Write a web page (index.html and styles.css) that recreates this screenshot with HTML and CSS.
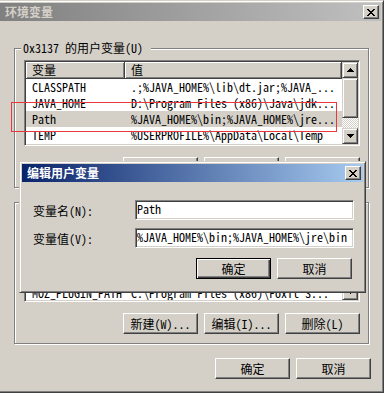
FILE: index.html
```html
<!DOCTYPE html>
<html lang="zh-CN">
<head>
    <meta charset="UTF-8">
    <meta name="viewport" content="width=device-width, initial-scale=1.0">
    <title>环境变量</title>
    <link rel="stylesheet" href="styles.css">
</head>
<body>
    <div class="window">
        <div class="caption inactive">
            <span class="caption-text">环境变量</span>
            <span class="cap-btn">
                <svg width="8" height="7" viewBox="0 0 8 7" shape-rendering="crispEdges"><path d="M0 0h2v1H0zM6 0h2v1H6zM1 1h2v1H1zM5 1h2v1H5zM2 2h4v1H2zM3 3h2v1H3zM2 4h4v1H2zM1 5h2v1H1zM5 5h2v1H5zM0 6h2v1H0zM6 6h2v1H6z" fill="#000"/></svg>
            </span>
        </div>

        <div class="group user-group">
            <div class="group-title">0x3137 的用户变量(U)</div>
            <div class="listview">
                <div class="list-main">
                    <div class="list-head">
                        <div class="hcell col-name">变量</div>
                        <div class="hcell col-value">值</div>
                    </div>
                    <div class="row"><span class="col-name">CLASSPATH</span><span class="col-value">.;%JAVA_HOME%\lib\dt.jar;%JAVA_...</span></div>
                    <div class="row"><span class="col-name">JAVA_HOME</span><span class="col-value">D:\Program Files (x86)\Java\jdk...</span></div>
                    <div class="row selected"><span class="col-name">Path</span><span class="col-value">%JAVA_HOME%\bin;%JAVA_HOME%\jre...</span></div>
                    <div class="row"><span class="col-name">TEMP</span><span class="col-value">%USERPROFILE%\AppData\Local\Temp</span></div>
                </div>
                <div class="scrollbar">
                    <div class="sb-btn"><svg width="7" height="4" viewBox="0 0 7 4" shape-rendering="crispEdges"><path d="M3 0h1v1H3zM2 1h3v1H2zM1 2h5v1H1zM0 3h7v1H0z" fill="#000"/></svg></div>
                    <div class="sb-thumb"></div>
                    <div class="sb-track"></div>
                    <div class="sb-btn"><svg width="7" height="4" viewBox="0 0 7 4" shape-rendering="crispEdges"><path d="M0 0h7v1H0zM1 1h5v1H1zM2 2h3v1H2zM3 3h1v1H3z" fill="#000"/></svg></div>
                </div>
            </div>
            <!-- these buttons sit under the edit dialog, only their top edge shows -->
            <div class="btn-row">
                <button class="btn"></button>
                <button class="btn"></button>
                <button class="btn"></button>
            </div>
        </div>

        <div class="group sys-group">
            <div class="listview">
                <div class="list-main">
                    <div class="rows scrolled">
                        <div class="row"><span class="col-name">MOZ_PLUGIN_PATH</span><span class="col-value">C:\Program Files (x86)\Foxit S...</span></div>
                    </div>
                </div>
                <div class="scrollbar">
                    <div class="sb-track"></div>
                    <div class="sb-btn"><svg width="7" height="4" viewBox="0 0 7 4" shape-rendering="crispEdges"><path d="M0 0h7v1H0zM1 1h5v1H1zM2 2h3v1H2zM3 3h1v1H3z" fill="#000"/></svg></div>
                </div>
            </div>
            <div class="btn-row">
                <button class="btn">新建(W)...</button>
                <button class="btn">编辑(I)...</button>
                <button class="btn">删除(L)</button>
            </div>
        </div>

        <div class="footer">
            <button class="btn">确定</button>
            <button class="btn">取消</button>
        </div>
    </div>

    <!-- red marker drawn over the Path row -->
    <div class="mark"></div>

    <div class="dialog">
        <div class="caption active">
            <span class="caption-text">编辑用户变量</span>
            <span class="cap-btn">
                <svg width="8" height="7" viewBox="0 0 8 7" shape-rendering="crispEdges"><path d="M0 0h2v1H0zM6 0h2v1H6zM1 1h2v1H1zM5 1h2v1H5zM2 2h4v1H2zM3 3h2v1H3zM2 4h4v1H2zM1 5h2v1H1zM5 5h2v1H5zM0 6h2v1H0zM6 6h2v1H6z" fill="#000"/></svg>
            </span>
        </div>
        <div class="dialog-body">
            <div class="field">
                <span class="field-label">变量名(N):</span>
                <div class="field-input">Path</div>
            </div>
            <div class="field">
                <span class="field-label">变量值(V):</span>
                <div class="field-input">%JAVA_HOME%\bin;%JAVA_HOME%\jre\bin</div>
            </div>
            <div class="dialog-buttons">
                <button class="btn default">确定</button>
                <button class="btn">取消</button>
            </div>
        </div>
    </div>
</body>
</html>
```

FILE: styles.css
```css
* {
    box-sizing: border-box;
}

body {
    margin: 0;
    background-color: #d4d0c8;
    font-family: "Noto Sans Mono CJK SC", "Noto Sans CJK SC", monospace;
    font-size: 12px;
    color: #000;
    overflow: hidden;
}

.window {
    width: 387px;
    height: 393px;
    margin-left: -3px;
    padding: 2px;
    background-color: #d4d0c8;
    border: 1px solid;
    border-color: #d4d0c8 #404040 #404040 #d4d0c8;
    box-shadow: inset 1px 1px #fff, inset -1px -1px #808080;
}

.caption {
    display: flex;
    align-items: center;
    justify-content: space-between;
    height: 18px;
    padding: 0 2px 0 5px;
    font-family: "Noto Sans CJK SC", sans-serif;
    font-weight: bold;
    line-height: 18px;
}

.caption.inactive {
    background: linear-gradient(to right, #808080, #c0c0c0);
    color: #d4d0c8;
}

.caption.active {
    background: linear-gradient(to right, #0a246a, #a6caf0);
    color: #fff;
}

.cap-btn {
    display: flex;
    align-items: center;
    justify-content: center;
    width: 16px;
    height: 14px;
    background-color: #d4d0c8;
    border: 1px solid;
    border-color: #fff #404040 #404040 #fff;
    box-shadow: inset -1px -1px #808080;
}

/* group boxes */
.group {
    width: 355px;
    margin-left: 14px;
    border: 1px solid #808080;
    box-shadow: inset 1px 1px #fff, 1px 1px #fff;
}

.user-group {
    margin-top: 27px;
    height: 140px;
}

.sys-group {
    margin-top: 14px;
    height: 142px;
    padding-top: 11px;
}

.group-title {
    width: fit-content;
    margin: -8px 0 0 6px;
    padding: 0 8px 0 2px;
    line-height: 14px;
    background-color: #d4d0c8;
}

/* list view */
.listview {
    display: flex;
    width: 336px;
    margin: 5px 0 0 9px;
    padding: 1px;
    background-color: #fff;
    border: 1px solid;
    border-color: #808080 #fff #fff #808080;
    box-shadow: inset 1px 1px #404040, inset -1px -1px #d4d0c8;
}

.user-group .listview {
    height: 86px;
}

.sys-group .listview {
    height: 88px;
    margin-top: 0;
}

.list-main {
    flex: 1;
    overflow: hidden;
}

.list-head {
    display: flex;
    height: 17px;
}

.hcell {
    line-height: 15px;
    background-color: #d4d0c8;
    border-right: 1px solid #404040;
    border-bottom: 1px solid #404040;
    box-shadow: inset 1px 1px #fff, inset -1px -1px #808080;
}

.col-name {
    flex: none;
    width: 99px;
    padding-left: 6px;
    white-space: nowrap;
    overflow: hidden;
}

.col-value {
    flex: 1;
    padding-left: 6px;
    white-space: nowrap;
    overflow: hidden;
}

.row {
    display: flex;
    height: 16px;
    line-height: 16px;
}

.row.selected {
    background-color: #d4d0c8;
}

/* system list is scrolled down, only the last row peeks out under the dialog */
.rows.scrolled {
    padding-top: 69px;
}

/* scroll bar */
.scrollbar {
    display: flex;
    flex-direction: column;
    flex: none;
    width: 16px;
}

.sb-btn,
.sb-thumb {
    flex: none;
    background-color: #d4d0c8;
    border: 1px solid;
    border-color: #d4d0c8 #404040 #404040 #d4d0c8;
    box-shadow: inset 1px 1px #fff, inset -1px -1px #808080;
}

.sb-btn {
    display: flex;
    align-items: center;
    justify-content: center;
    height: 16px;
}

.sb-thumb {
    height: 40px;
}

.sb-track {
    flex: 1;
    background: repeating-conic-gradient(#fff 0 25%, #d4d0c8 0 50%) 0 0 / 2px 2px;
}

/* buttons */
.btn {
    display: flex;
    align-items: center;
    justify-content: center;
    width: 75px;
    height: 21px;
    padding: 0;
    font: inherit;
    color: #000;
    background-color: #d4d0c8;
    border: 1px solid;
    border-color: #fff #404040 #404040 #fff;
    box-shadow: inset -1px -1px #808080;
}

.btn.default {
    border-color: #000;
    box-shadow: inset 1px 1px #fff, inset -1px -1px #404040, inset -2px -2px #808080;
}

.btn-row {
    display: flex;
    justify-content: flex-end;
    gap: 6px;
    margin: 11px 8px 0 0;
}

.footer {
    display: flex;
    justify-content: flex-end;
    gap: 6px;
    margin: 14px 10px 0 0;
}

/* annotation */
.mark {
    position: absolute;
    left: 11px;
    top: 102px;
    width: 326px;
    height: 30px;
    border: 1px solid #e8383d;
}

/* edit dialog on top */
.dialog {
    position: absolute;
    left: 19px;
    top: 161px;
    width: 347px;
    height: 132px;
    padding: 2px;
    background-color: #d4d0c8;
    border: 1px solid;
    border-color: #d4d0c8 #404040 #404040 #d4d0c8;
    box-shadow: inset 1px 1px #fff, inset -1px -1px #808080;
}

.dialog-body {
    padding: 18px 9px 0 11px;
}

.field {
    display: flex;
    align-items: center;
    height: 20px;
}

.field + .field {
    margin-top: 8px;
}

.field-label {
    width: 102px;
}

.field-input {
    flex: 1;
    height: 20px;
    padding-left: 1px;
    line-height: 16px;
    white-space: nowrap;
    overflow: hidden;
    background-color: #fff;
    border: 1px solid;
    border-color: #808080 #fff #fff #808080;
    box-shadow: inset 1px 1px #404040, inset -1px -1px #d4d0c8;
}

.dialog-buttons {
    display: flex;
    justify-content: flex-end;
    gap: 6px;
    margin: 10px 2px 0 0;
}
```
